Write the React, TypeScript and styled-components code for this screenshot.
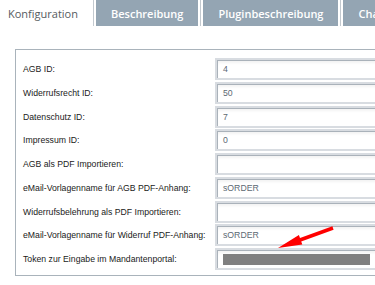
import { FC } from 'react';
import styled, { createGlobalStyle } from 'styled-components';

const GlobalStyle = createGlobalStyle`
  body {
    margin: 0;
    background: #fff;
    overflow: hidden;
  }
`;

const Page = styled.div`
  position: relative;
  width: 375px;
  height: 285px;
  overflow: hidden;
`;

const TabBar = styled.ul`
  display: flex;
  margin: 0;
  padding: 0;
  list-style: none;
  height: 26px;
  white-space: nowrap;
`;

const TabItem = styled.li<{ $active?: boolean }>`
  display: flex;
  padding: ${({ $active }) => ($active ? '0' : '0 2px')};
  border-right: 1px solid #c3c9cf;
`;

const TabLabel = styled.span<{ $active?: boolean }>`
  display: flex;
  align-items: center;
  padding: ${({ $active }) => ($active ? '0 15px 0 8px' : '0 15px')};
  background: ${({ $active }) => ($active ? '#fff' : '#94a5b3')};
  color: ${({ $active }) => ($active ? '#555b61' : '#fff')};
  font-family: 'Open Sans', sans-serif;
  font-size: 11px;
  font-weight: ${({ $active }) => ($active ? 400 : 600)};
`;

const Panel = styled.form`
  display: grid;
  row-gap: 1.75px;
  width: 420px;
  margin: 23px 0 0 15px;
  padding: 8px 0 5px;
  border: 1px solid #a9b3bb;
  border-right: none;
`;

const Row = styled.div`
  display: grid;
  grid-template-columns: 199px 1fr;
  align-items: center;
`;

const Label = styled.label`
  padding-left: 7px;
  color: #1a1a1a;
  font-family: 'Liberation Sans', Arial, sans-serif;
  font-size: 8.7px;
  white-space: nowrap;
  overflow: hidden;
`;

const Field = styled.div`
  display: flex;
  align-items: center;
  box-sizing: border-box;
  height: 22px;
  padding-left: 6px;
  border: 2px solid #d8dce1;
  background: #fff;
  box-shadow: inset 1px 1px 0 #aab2ba, inset 0 3px 3px rgba(0, 0, 0, 0.05);
  color: #5d6973;
  font-family: 'Liberation Sans', Arial, sans-serif;
  font-size: 8.7px;
`;

const Redacted = styled.span`
  display: block;
  width: 147px;
  height: 11px;
  background: #808080;
`;

const Arrow = styled.svg`
  position: absolute;
  left: 270px;
  top: 220px;
  width: 70px;
  height: 35px;
  pointer-events: none;
`;

type Setting = {
  label: string;
  value?: string;
  redacted?: boolean;
};

const settings: Setting[] = [
  { label: 'AGB ID:', value: '4' },
  { label: 'Widerrufsrecht ID:', value: '50' },
  { label: 'Datenschutz ID:', value: '7' },
  { label: 'Impressum ID:', value: '0' },
  { label: 'AGB als PDF Importieren:' },
  { label: 'eMail-Vorlagenname für AGB PDF-Anhang:', value: 'sORDER' },
  { label: 'Widerrufsbelehrung als PDF Importieren:' },
  { label: 'eMail-Vorlagenname für Widerruf PDF-Anhang:', value: 'sORDER' },
  { label: 'Token zur Eingabe im Mandantenportal:', redacted: true },
];

const tabs = ['Konfiguration', 'Beschreibung', 'Pluginbeschreibung', 'Changelog'];

const App: FC = () => (
  <Page>
    <GlobalStyle />
    <TabBar>
      {tabs.map((tab, i) => (
        <TabItem key={tab} $active={i === 0}>
          <TabLabel $active={i === 0}>{tab}</TabLabel>
        </TabItem>
      ))}
    </TabBar>
    <Panel>
      {settings.map((s) => (
        <Row key={s.label}>
          <Label>{s.label}</Label>
          <Field>{s.redacted ? <Redacted /> : s.value}</Field>
        </Row>
      ))}
    </Panel>
    {/* red arrow pointing at the token field */}
    <Arrow viewBox="270 220 70 35">
      <polygon
        points="278,248 298.9,235.1 300,238.1 332.4,226.3 333.6,229.7 301.2,241.5 302.3,244.5"
        fill="#f00"
      />
    </Arrow>
  </Page>
);

export default App;
